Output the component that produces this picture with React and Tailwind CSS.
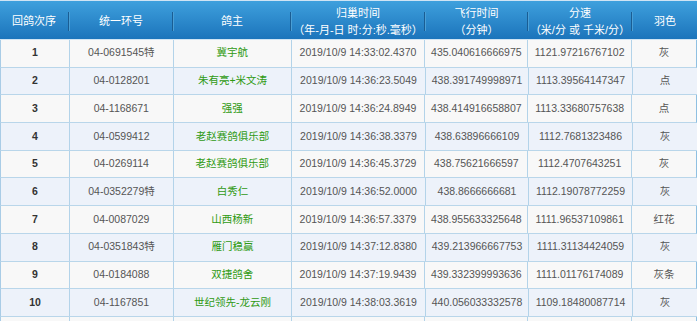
import React from 'react'

const rows = [
  ['1', '04-0691545特', '冀宇航', '2019/10/9 14:33:02.4370', '435.040616666975', '1121.97216767102', '灰'],
  ['2', '04-0128201', '朱有亮+米文涛', '2019/10/9 14:36:23.5049', '438.391749998971', '1113.39564147347', '点'],
  ['3', '04-1168671', '强强', '2019/10/9 14:36:24.8949', '438.414916658807', '1113.33680757638', '点'],
  ['4', '04-0599412', '老赵赛鸽俱乐部', '2019/10/9 14:36:38.3379', '438.63896666109', '1112.7681323486', '灰'],
  ['5', '04-0269114', '老赵赛鸽俱乐部', '2019/10/9 14:36:45.3729', '438.75621666597', '1112.4707643251', '灰'],
  ['6', '04-0352279特', '白秀仁', '2019/10/9 14:36:52.0000', '438.8666666681', '1112.19078772259', '灰'],
  ['7', '04-0087029', '山西杨新', '2019/10/9 14:36:57.3379', '438.955633325648', '1111.96537109861', '红花'],
  ['8', '04-0351843特', '雁门稳赢', '2019/10/9 14:37:12.8380', '439.213966667753', '1111.31134424059', '灰'],
  ['9', '04-0184088', '双捷鸽舍', '2019/10/9 14:37:19.9439', '439.332399993636', '1111.01176174089', '灰条'],
  ['10', '04-1167851', '世纪领先-龙云刚', '2019/10/9 14:38:03.3619', '440.056033332578', '1109.18480087714', '灰'],
]

const widths = ['w-[70px]', 'w-[104px]', 'w-[118px]', 'w-[134px]', 'w-[103px]', 'w-[104px]', 'w-[64px]']

const headers = [
  ['回鸽次序'],
  ['统一环号'],
  ['鸽主'],
  ['归巢时间', '（年-月-日 时:分:秒.毫秒）'],
  ['飞行时间', '（分钟）'],
  ['分速', '（米/分 或 千米/分）'],
  ['羽色'],
]

function HeaderCell({ lines, width, last }) {
  return (
    <div className={`${width} h-full flex items-center`}>
      <div className="flex-1 flex flex-col items-center justify-center leading-[17px] text-white text-[11px] whitespace-nowrap">
        {lines.map((l) => (
          <span key={l}>{l}</span>
        ))}
      </div>
      {!last && <div className="w-[2px] h-[19px] bg-[#1a5d93] border-r border-[#4a9fd6]" />}
    </div>
  )
}

export default function App() {
  return (
    <div
      className="w-[700px] h-[321px] overflow-hidden bg-white"
      style={{ fontFamily: '"Liberation Sans", "Noto Sans CJK SC", sans-serif' }}
    >
      <div className="w-[697px]">
        {/* header */}
        <div className="h-[40px] pt-[3px] flex border-t border-[#cfe4f4] bg-gradient-to-b from-[#3ea0dd] to-[#1b74bb] border-b border-[#1766a8]">
          {headers.map((h, i) => (
            <HeaderCell key={i} lines={h} width={widths[i]} last={i === headers.length - 1} />
          ))}
        </div>

        {/* body */}
        {[...rows, null].map((r, ri) => {
          const odd = ri % 2 === 0
          return (
            <div
              key={ri}
              className={`h-[27.7px] flex border-b border-[#b9d6ea] border-l border-l-[#a9cce6] ${
                odd ? 'bg-[#f8f8f8] border-r border-r-[#8fc0e2]' : 'bg-[#edf2fa]'
              }`}
            >
              {widths.map((w, ci) => {
                const val = r ? r[ci] : ''
                let color = 'text-[#555]'
                if (ci === 0) color = 'text-[#333] font-bold'
                if (ci === 2) color = 'text-[#2f9a12]'
                return (
                  <div
                    key={ci}
                    className={`${ci === 0 ? 'w-[69px]' : w} h-full flex items-center justify-center text-[10.5px] whitespace-nowrap ${color} ${
                      ci < 6 ? 'border-r border-[#b3d3e9]' : ''
                    }`}
                  >
                    {val}
                  </div>
                )
              })}
            </div>
          )
        })}
      </div>
    </div>
  )
}
